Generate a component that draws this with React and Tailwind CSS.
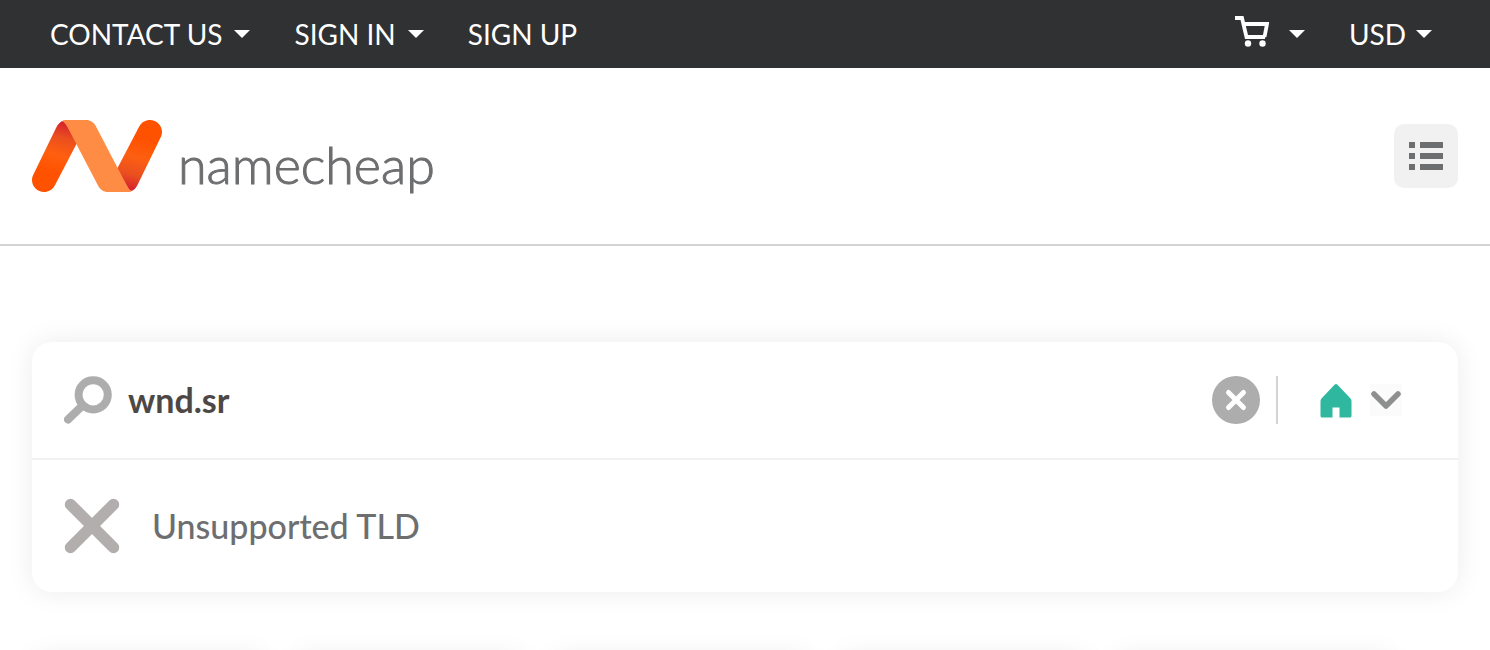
import React from "react";

function Caret() {
  return (
    <svg width="16" height="8" viewBox="0 0 16 8" fill="currentColor" aria-hidden="true">
      <path d="M0 0h16L8 8z" />
    </svg>
  );
}

function CartIcon() {
  return (
    <svg width="34" height="32" viewBox="0 0 34 32" fill="none" aria-hidden="true">
      <path d="M0 2h7l4.500 19H30M8.500 8H32l-2.500 13" stroke="currentColor" strokeWidth="3.800" />
      <circle cx="13" cy="27.500" r="3.200" fill="currentColor" />
      <circle cx="27.500" cy="27.500" r="3.200" fill="currentColor" />
    </svg>
  );
}

function LogoMark() {
  return (
    <svg width="130" height="72" viewBox="0 0 130 72" aria-hidden="true">
      <defs>
        <linearGradient id="leftLeg" x1="32" y1="2" x2="20" y2="52" gradientUnits="userSpaceOnUse">
          <stop offset="0" stopColor="#d5202f" />
          <stop offset="0.300" stopColor="#ea4f1f" />
          <stop offset="0.650" stopColor="#ff5f0f" />
          <stop offset="1" stopColor="#ff5200" />
        </linearGradient>
        <linearGradient id="rightLeg" x1="98" y1="70" x2="110" y2="20" gradientUnits="userSpaceOnUse">
          <stop offset="0" stopColor="#d5202f" />
          <stop offset="0.300" stopColor="#ea4f1f" />
          <stop offset="0.650" stopColor="#fd5f11" />
          <stop offset="1" stopColor="#ff5200" />
        </linearGradient>
      </defs>
      <path d="M1.400 54.500 24 8C26 4 28 1.500 32 .5L45 23 22.800 65.500C20.500 69.800 16.500 72 12 72 5.500 72 0 66.600 0 60c0-2 .5-3.800 1.400-5.500z" fill="url(#leftLeg)" />
      <path d="M128.600 17.500 106 64c-2 4-4 6.500-8 7.500L85 49 107.200 6.500C109.500 2.200 113.500 0 118 0c6.600 0 12 5.400 12 12 0 2-.5 3.800-1.400 5.500z" fill="url(#rightLeg)" />
      <path d="M34 0h20c4.500 0 8 2.500 10 6.500L93.500 63c2.500 5 4 7.500 6.500 7.500-1 1-2.500 1.500-4 1.500H76c-4.500 0-8-2.500-10-6.500L36.500 9C34 4 32 1.500 30 1.200 31 .4 32.500 0 34 0z" fill="#ff8c44" />
    </svg>
  );
}

function ListIcon() {
  return (
    <svg width="34" height="29" viewBox="0 0 34 29" fill="#6d6e70" aria-hidden="true">
      <path d="M0 0h6v6H0zM11 0h23v6H11zM0 11h6v6H0zM11 11h23v6H11zM0 22h6v6H0zM11 22h23v6H11z" />
    </svg>
  );
}

function SearchIcon() {
  return (
    <svg width="48" height="48" viewBox="0 0 48 48" fill="none" stroke="#adadad" strokeWidth="8" aria-hidden="true">
      <circle cx="29.200" cy="18.800" r="14.600" />
      <path d="M18.500 29.500 4 43.500" strokeLinecap="round" />
    </svg>
  );
}

const filterWidths = ["w-[236px]", "w-[234px]", "w-[263px]", "w-[252px]", "w-[283px]"];

export default function App() {
  return (
    <div className="h-screen overflow-hidden bg-white font-['Lato','Open_Sans',sans-serif]">
      <nav className="flex h-17 items-center justify-between bg-[#303133] pr-[58px] pl-[50px] text-[28px] leading-9 text-white">
        <div className="flex items-center gap-11">
          <button className="flex items-center gap-3">CONTACT US <Caret /></button>
          <button className="flex items-center gap-3">SIGN IN <Caret /></button>
          <a href="#signup">SIGN UP</a>
        </div>
        <div className="flex items-center gap-11">
          <button className="flex items-center gap-5 pb-1" aria-label="Shopping cart"><CartIcon /> <span className="pt-1"><Caret /></span></button>
          <button className="flex items-center gap-2.5">USD <Caret /></button>
        </div>
      </nav>

      <header className="flex h-[178px] items-center justify-between border-b-2 border-[#d4d4d4] px-8">
        <a href="#home" className="flex items-center gap-4">
          <LogoMark />
          <span className="pt-4 text-[52px] leading-14 font-light text-[#6d6e70] [-webkit-text-stroke:1px_#6d6e70]">namecheap</span>
        </a>
        <button aria-label="Menu" className="flex size-16 items-center justify-center rounded-[10px] bg-[#f1f1f1]">
          <ListIcon />
        </button>
      </header>

      <main className="px-8 pt-24">
        <section className="rounded-[20px] bg-white shadow-[0_0_28px_rgba(0,0,0,0.08)]">
          <form className="flex h-[118px] items-center border-b-2 border-[#f1f1f1] pr-14 pl-8" onSubmit={(e) => e.preventDefault()}>
            <label htmlFor="domain" aria-label="Search domains"><SearchIcon /></label>
            <input
              id="domain"
              type="text"
              defaultValue="wnd.sr"
              className="ml-4 min-w-0 flex-1 bg-transparent text-[34px] leading-10 font-bold text-[#4d4845] outline-none"
            />
            <button type="reset" aria-label="Clear">
              <svg width="48" height="48" viewBox="0 0 48 48" aria-hidden="true">
                <circle cx="24" cy="24" r="24" fill="#adadad" />
                <path d="m16.500 16.500 15 15m0-15-15 15" stroke="#fff" strokeWidth="5" strokeLinecap="round" />
              </svg>
            </button>
            <div className="ml-4 h-12 w-0.5 bg-[#d4d4d4]" />
            <button type="button" aria-label="Search type" className="ml-[42px] flex items-center gap-[18px]">
              <svg width="32" height="36" viewBox="0 0 32 36" fill="#30b79f" aria-hidden="true">
                <path d="M14.500 2.700Q16 1.300 17.500 2.700L30.500 16.500Q31.500 17.500 31.500 19V34Q31.500 35.500 30 35.500H19.500V25.500H12.500V35.500H2Q.5 35.500 .5 34V19Q.5 17.500 1.500 16.500z" />
              </svg>
              <svg className="bg-[#fbfbfb]" width="32" height="32" viewBox="0 0 32 32" fill="none" aria-hidden="true">
                <path d="m4 10 12 12 12-12" stroke="#8e8f8f" strokeWidth="5.500" strokeLinecap="round" strokeLinejoin="round" />
              </svg>
            </button>
          </form>
          <div className="flex h-33 items-center gap-8 px-8">
            <svg width="56" height="56" viewBox="0 0 56 56" aria-hidden="true">
              <path d="m6.500 6.500 43 43m0-43-43 43" stroke="#b1aead" strokeWidth="11.500" strokeLinecap="round" />
            </svg>
            <p className="text-[34px] leading-10 font-medium text-[#6d6e70]">Unsupported TLD</p>
          </div>
        </section>

        <div className="mt-16 flex gap-6">
          {filterWidths.map((width) => (
            <div key={width} className={"h-20 rounded-[20px] bg-white shadow-[0_0_28px_rgba(0,0,0,0.08)] " + width} />
          ))}
        </div>
      </main>
    </div>
  );
}
